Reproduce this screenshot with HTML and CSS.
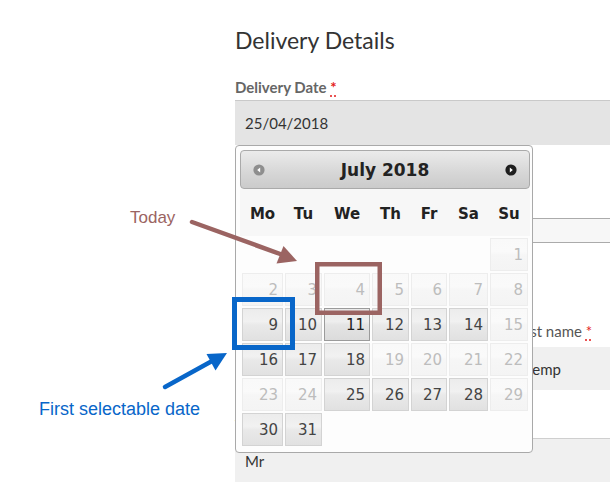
FILE: index.html
```html
<!DOCTYPE html>
<html lang="en">
<head>
<meta charset="utf-8">
<title>Delivery Details</title>
<link rel="stylesheet" href="styles.css">
</head>
<body>
<div class="page">
  <h1 class="title">Delivery Details</h1>

  <div class="field">
    <div class="label strong">Delivery Date <abbr class="req" title="required">*</abbr></div>
    <div class="input input-date">25/04/2018</div>
  </div>

  <div class="band"></div>

  <div class="row">
    <div class="field">
      <div class="label">First name <abbr class="req" title="required">*</abbr></div>
      <div class="input input-light">Kevin</div>
    </div>
    <div class="field">
      <div class="label">Last name <abbr class="req" title="required">*</abbr></div>
      <div class="input input-light input-shift">Kemp</div>
    </div>
  </div>

  <div class="field field-title">
    <div class="label">Title</div>
    <div class="input input-light input-bordered">Mr</div>
  </div>

  <div class="datepicker">
    <div class="dp-header">
      <span class="dp-nav">
        <svg width="12" height="12" viewBox="0 0 12 12"><circle cx="6" cy="6" r="5.6" fill="#8e8e8e"/><path d="M7.2 3.4 L4.2 6 L7.2 8.6 Z" fill="#fff"/></svg>
      </span>
      <span class="dp-title">July 2018</span>
      <span class="dp-nav">
        <svg width="12" height="12" viewBox="0 0 12 12"><circle cx="6" cy="6" r="5.6" fill="#1e1e1e"/><path d="M4.8 3.4 L7.8 6 L4.8 8.6 Z" fill="#fff"/></svg>
      </span>
    </div>
    <div class="dp-weekdays">
      <span>Mo</span><span>Tu</span><span>We</span><span>Th</span><span>Fr</span><span>Sa</span><span>Su</span>
    </div>
    <div class="dp-grid">
      <span class="empty"></span><span class="empty"></span><span class="empty"></span><span class="empty"></span><span class="empty"></span><span class="empty"></span><span class="d off">1</span>
      <span class="d off">2</span><span class="d off">3</span><span class="d off">4</span><span class="d off">5</span><span class="d off">6</span><span class="d off">7</span><span class="d off">8</span>
      <span class="d">9</span><span class="d">10</span><span class="d hover">11</span><span class="d">12</span><span class="d">13</span><span class="d">14</span><span class="d off">15</span>
      <span class="d">16</span><span class="d">17</span><span class="d">18</span><span class="d off">19</span><span class="d off">20</span><span class="d off">21</span><span class="d off">22</span>
      <span class="d off">23</span><span class="d off">24</span><span class="d">25</span><span class="d">26</span><span class="d">27</span><span class="d">28</span><span class="d off">29</span>
      <span class="d">30</span><span class="d">31</span>
    </div>
  </div>

  <svg class="notes" width="610" height="499" viewBox="0 0 610 499">
    <text x="130" y="223" class="note note-today">Today</text>
    <line x1="192" y1="222" x2="283" y2="255" stroke="#9b6462" stroke-width="4.5" stroke-linecap="round"/>
    <polygon points="297,261 276.5,263.5 283.5,246" fill="#9b6462"/>
    <rect x="317.25" y="264.25" width="62.5" height="48.5" fill="none" stroke="#9b6462" stroke-width="4.5"/>

    <rect x="234.5" y="299.5" width="58" height="48" fill="none" stroke="#0866c9" stroke-width="5"/>
    <line x1="165" y1="387" x2="213" y2="360.5" stroke="#0866c9" stroke-width="4.5" stroke-linecap="round"/>
    <polygon points="227,353 215.5,370.5 206.5,354" fill="#0866c9"/>
    <text x="39" y="415" class="note note-first">First selectable date</text>
  </svg>
</div>
</body>
</html>
```

FILE: styles.css
```css
html, body {
  margin: 0;
  padding: 0;
  background: #fff;
}

body {
  font-family: Lato, "Open Sans", sans-serif;
  color: #333;
}

.page {
  position: relative;
  width: 610px;
  height: 499px;
  box-sizing: border-box;
  padding: 25px 0 0 235px;
  overflow: hidden;
}

.title {
  margin: 0 0 23px;
  font-size: 23px;
  line-height: 30px;
  font-weight: 400;
  color: #333;
}

.label {
  font-size: 15px;
  line-height: 18px;
  color: #555;
  margin-bottom: 4px;
  white-space: nowrap;
}

.label.strong {
  font-weight: 700;
  color: #666;
}

.req {
  color: #e41b1b;
  text-decoration: underline dotted;
  text-underline-offset: 3px;
}

.input {
  display: flex;
  align-items: center;
  box-sizing: border-box;
  padding: 0 10px;
  font-size: 15px;
  color: #333;
  white-space: nowrap;
}

.input-date {
  height: 45px;
  background: #e4e4e4;
  border-top: 1px solid #c9c9c9;
}

.band {
  margin-top: 73px;
  height: 25px;
  box-sizing: border-box;
  background: #f7f7f7;
  border-top: 1px solid #ababab;
  border-bottom: 1px solid #ababab;
}

.row {
  display: grid;
  grid-template-columns: 270px 1fr;
  column-gap: 10px;
  margin-top: 79px;
}

.row .label {
  margin-bottom: 7px;
}

.input-light {
  height: 43px;
  background: #f0f0f0;
}

.input-shift {
  padding-left: 8px;
}

.field-title {
  margin-top: 26px;
}

.input-bordered {
  height: 44px;
  border-top: 1px solid #cfcfcf;
}

/* datepicker popup */
.datepicker {
  position: absolute;
  left: 235px;
  top: 145px;
  width: 298px;
  height: 308px;
  box-sizing: border-box;
  padding: 4px 2px 0 4px;
  border: 1px solid #a9a9a9;
  border-radius: 4px;
  background: #fdfdfd;
  font-family: "DejaVu Sans", Verdana, sans-serif;
  z-index: 2;
}

.dp-header {
  display: flex;
  align-items: center;
  justify-content: space-between;
  height: 39px;
  box-sizing: border-box;
  padding: 0 12px 0 12px;
  border: 1px solid #aaa;
  border-radius: 4px;
  background: linear-gradient(#ebebeb, #d6d6d6 60%, #cbcbcb);
}

.dp-nav {
  display: flex;
  width: 12px;
  height: 12px;
}

.dp-title {
  font-size: 17px;
  font-weight: 700;
  color: #222;
}

.dp-weekdays,
.dp-grid {
  display: grid;
  grid-template-columns: 41px 37px 46px 37px 36px 39px 38px;
  column-gap: 2px;
  padding: 0 2px;
}

.dp-weekdays {
  height: 47px;
  box-sizing: border-box;
  padding-top: 2px;
  align-items: center;
  background: #f7f7f7;
  font-size: 15px;
  font-weight: 700;
  color: #222;
  text-align: center;
}

.dp-grid {
  grid-auto-rows: 33px;
  row-gap: 2px;
  padding-top: 2px;
}

.d {
  box-sizing: border-box;
  border: 1px solid #d3d3d3;
  padding: 1px 4px 0 0;
  text-align: right;
  font-size: 15px;
  line-height: 31px;
  color: #444;
  background: linear-gradient(#ececec 0%, #f1f1f1 40%, #e9e9e9 52%, #e1e1e1 100%);
}

.d.hover {
  border-color: #9b9b9b;
  color: #222;
  background: linear-gradient(#e9e9e9 0%, #eeeeee 40%, #e4e4e4 52%, #dbdbdb 100%);
}

.d.off {
  border-color: #ededed;
  color: #bdbdbd;
  background: linear-gradient(#f9f9f9 0%, #fafafa 40%, #f6f6f6 52%, #f4f4f4 100%);
}

/* annotations */
.notes {
  position: absolute;
  left: 0;
  top: 0;
  z-index: 3;
  pointer-events: none;
}

.note {
  font-family: "Liberation Sans", Arial, sans-serif;
}

.note-today {
  font-size: 17px;
  fill: #9b6462;
}

.note-first {
  font-size: 18px;
  fill: #0866c9;
}
```
